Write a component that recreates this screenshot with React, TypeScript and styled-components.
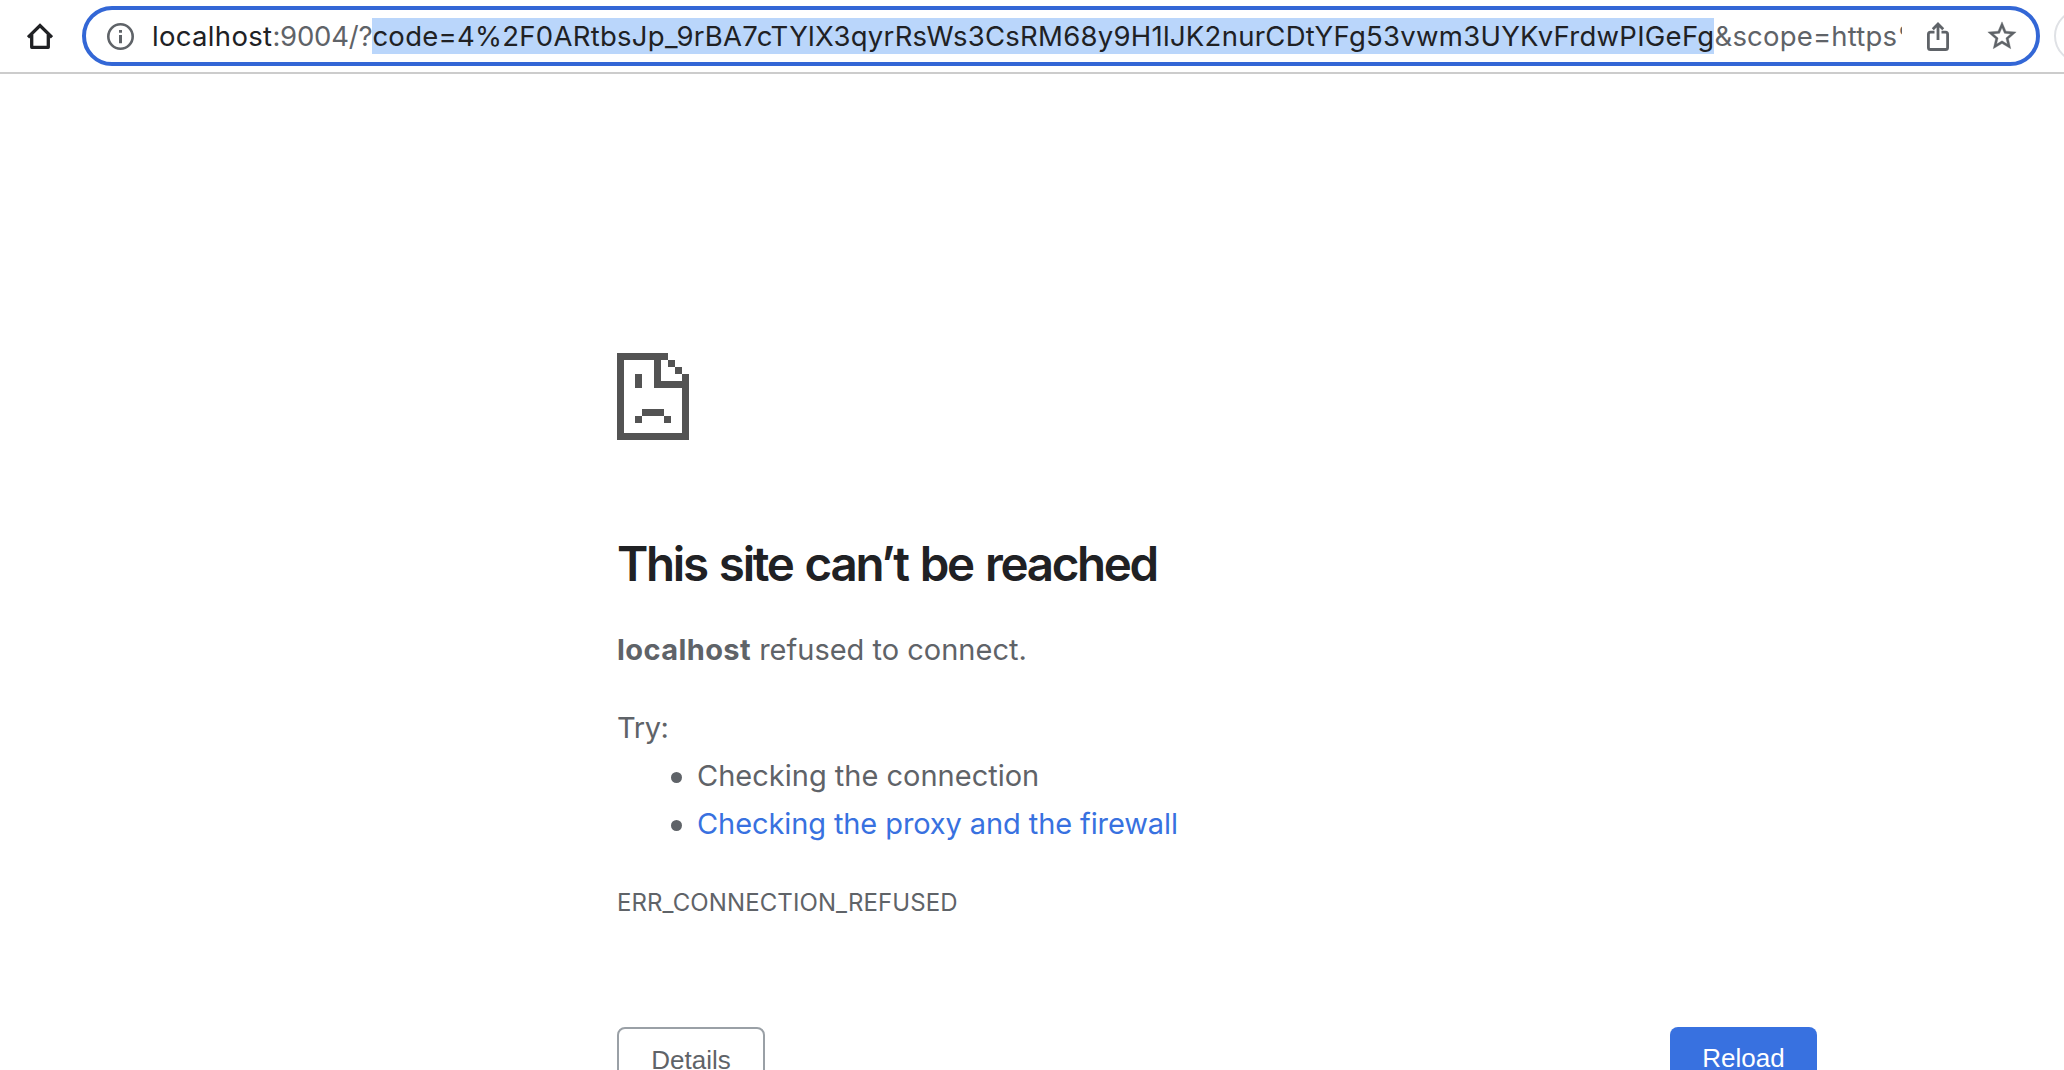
import React from "react";
import styled, { createGlobalStyle } from "styled-components";

const GlobalStyle = createGlobalStyle`
  * { box-sizing: border-box; }
  body {
    margin: 0;
    background: #fff;
    font-family: Inter, "Noto Sans", sans-serif;
    -webkit-font-smoothing: antialiased;
  }
`;

const Page = styled.div`
  height: 100vh;
  overflow: hidden;
  display: flex;
  flex-direction: column;
`;

const Toolbar = styled.header`
  height: 74px;
  flex: none;
  display: flex;
  align-items: flex-start;
  padding-top: 6px;
  border-bottom: 2px solid #ccc;
  overflow: hidden;
`;

const HomeButton = styled.div`
  flex: none;
  width: 82px;
  padding: 17px 0 0 27px;
  svg { display: block; }
`;

const Omnibox = styled.div`
  flex: none;
  width: 1958px;
  height: 60px;
  display: flex;
  align-items: center;
  padding-left: 21px;
  border: 4px solid #3367d6;
  border-radius: 30px;
  svg { display: block; flex: none; }
`;

const Url = styled.div`
  width: 1750px;
  margin-left: 18px;
  display: flex;
  overflow: hidden;
  white-space: pre;
  font-size: 27.5px;
  line-height: 36px;
`;

const UrlPart = styled.span<{ $tone: "host" | "dim" | "selected"; $spacing: number }>`
  flex: none;
  color: ${(p) => (p.$tone === "dim" ? "#5f6368" : "#202124")};
  background: ${(p) => (p.$tone === "selected" ? "#bad6fb" : "transparent")};
  letter-spacing: ${(p) => p.$spacing}px;
`;

const Actions = styled.div`
  display: flex;
  align-items: center;
  gap: 36px;
  margin-left: 25px;
`;

const Avatar = styled.div`
  flex: none;
  width: 54px;
  height: 54px;
  margin: 3px 0 0 14px;
  border: 2px solid #dfe1e5;
  border-radius: 50%;
`;

const ErrorPanel = styled.main`
  width: 1200px;
  flex: none;
  margin-left: 617px;
  padding-top: 279px;
  color: #5f6368;
  font-size: 29px;
  line-height: 48px;
  > svg { display: block; }
`;

const Title = styled.h1`
  margin: 94px 0 32px;
  color: #202124;
  font-size: 47.5px;
  font-weight: 570;
  line-height: 60px;
  letter-spacing: -2.3px;
  word-spacing: 2.4px;
  white-space: nowrap;
`;

const Paragraph = styled.p<{ $spacing?: number }>`
  margin: 0;
  letter-spacing: ${(p) => p.$spacing ?? 0}px;
`;

const Host = styled.strong`
  font-weight: 700;
  letter-spacing: 0.4px;
`;

const Suggestions = styled.div`
  margin-top: 30px;
`;

const List = styled.ul`
  margin: 0;
  padding: 0 0 0 54px;
  list-style: none;
`;

const Item = styled.li`
  display: flex;
  align-items: center;
  gap: 15px;
  &::before {
    content: "";
    width: 11px;
    height: 11px;
    margin-top: 2px;
    border-radius: 50%;
    background: #5f6368;
  }
`;

const Link = styled.a`
  color: #3871e0;
  letter-spacing: -0.1px;
`;

const ErrorCode = styled.div`
  margin-top: 31px;
  font-size: 24px;
  letter-spacing: 0.1px;
`;

const Buttons = styled.div`
  display: flex;
  align-items: flex-start;
  justify-content: space-between;
  margin-top: 100px;
`;

const Button = styled.button<{ $primary?: boolean }>`
  width: ${(p) => (p.$primary ? 147 : 148)}px;
  height: ${(p) => (p.$primary ? 62 : 66)}px;
  padding: 0;
  border: ${(p) => (p.$primary ? "0" : "2px solid #9aa0a6")};
  border-radius: 8px;
  background: ${(p) => (p.$primary ? "#3871e0" : "#fff")};
  color: ${(p) => (p.$primary ? "#fff" : "#5f6368")};
  font: 26px "Liberation Sans", Arial, sans-serif;
`;

const HomeIcon = () => (
  <svg width="26" height="27" viewBox="27 23 26 27" fill="none" stroke="#202124" strokeWidth="3.3">
    <path d="M28 37.3 40 25.6 52 37.3" />
    <path d="M31.7 34.5V47.3H48.3V34.5" strokeLinejoin="round" />
  </svg>
);

const InfoIcon = () => (
  <svg width="27" height="27" viewBox="0 0 27 27" fill="#5f6368">
    <circle cx="13.5" cy="13.5" r="12.2" fill="none" stroke="#5f6368" strokeWidth="2.6" />
    <path d="M12 7h3v2.8h-3zM12 12h3v8.2h-3z" />
  </svg>
);

const ShareIcon = () => (
  <svg width="22" height="29" viewBox="1927 22 22 29" fill="none" stroke="#5f6368" strokeWidth="2.8">
    <path d="M1934.5 32.1H1930.5Q1928.4 32.1 1928.4 34.2V47.4Q1928.4 49.5 1930.5 49.5H1945.5Q1947.6 49.5 1947.6 47.4V34.2Q1947.6 32.1 1945.5 32.1H1941.5" />
    <path d="M1938 40V24.5M1932.8 29.2 1938 24 1943.2 29.2" />
  </svg>
);

const StarIcon = () => (
  <svg width="34" height="34" viewBox="0 0 24 24" fill="#5f6368" stroke="#5f6368" strokeWidth="0.25">
    <path d="M22 9.24l-7.19-.62L12 2 9.19 8.63 2 9.24l5.46 4.73L5.82 21 12 17.27 18.18 21l-1.63-7.03L22 9.24zM12 15.4l-3.76 2.27 1-4.28-3.32-2.88 4.38-.38L12 6.1l1.71 4.04 4.38.38-3.32 2.88 1 4.28L12 15.4z" />
  </svg>
);

const SadPageIcon = () => (
  <svg width="72" height="87" viewBox="17 13 72 87" fill="#535353" shapeRendering="crispEdges">
    <path d="M17 13H68V20H24V93H82V48H54V20H61V41H82V34H89V100H17Z" />
    <path d="M68 20h7v7h-7zM75 27h7v7h-7zM35 34h7v14h-7zM42 69h22v7h-22zM35 76h7v7h-7zM64 76h7v7h-7z" />
  </svg>
);

export default function App() {
  return (
    <Page>
      <GlobalStyle />
      <Toolbar>
        <HomeButton><HomeIcon /></HomeButton>
        <Omnibox>
          <InfoIcon />
          <Url>
            <UrlPart $tone="host" $spacing={0.32}>localhost</UrlPart>
            <UrlPart $tone="dim" $spacing={-0.2}>:9004/?</UrlPart>
            <UrlPart $tone="selected" $spacing={0.268}>
              code=4%2F0ARtbsJp_9rBA7cTYlX3qyrRsWs3CsRM68y9H1lJK2nurCDtYFg53vwm3UYKvFrdwPIGeFg
            </UrlPart>
            <UrlPart $tone="dim" $spacing={0.2}>&amp;scope=https%3A</UrlPart>
          </Url>
          <Actions>
            <ShareIcon />
            <StarIcon />
          </Actions>
        </Omnibox>
        <Avatar />
      </Toolbar>
      <ErrorPanel>
        <SadPageIcon />
        <Title>This site can’t be reached</Title>
        <Paragraph><Host>localhost</Host> refused to connect.</Paragraph>
        <Suggestions>
          <Paragraph $spacing={-0.4}>Try:</Paragraph>
          <List>
            <Item>Checking the connection</Item>
            <Item><Link>Checking the proxy and the firewall</Link></Item>
          </List>
        </Suggestions>
        <ErrorCode>ERR_CONNECTION_REFUSED</ErrorCode>
        <Buttons>
          <Button>Details</Button>
          <Button $primary>Reload</Button>
        </Buttons>
      </ErrorPanel>
    </Page>
  );
}
